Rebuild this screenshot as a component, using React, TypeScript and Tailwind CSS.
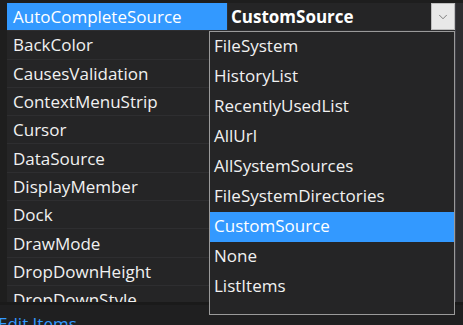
import { ChevronDown } from "lucide-react";

const PROPS = [
  "AutoCompleteSource",
  "BackColor",
  "CausesValidation",
  "ContextMenuStrip",
  "Cursor",
  "DataSource",
  "DisplayMember",
  "Dock",
  "DrawMode",
  "DropDownHeight",
  "DropDownStyle",
];

const OPTIONS = [
  "FileSystem",
  "HistoryList",
  "RecentlyUsedList",
  "AllUrl",
  "AllSystemSources",
  "FileSystemDirectories",
  "CustomSource",
  "None",
  "ListItems",
];

export default function App() {
  return (
    <div
      className="relative w-[463px] h-[325px] overflow-hidden bg-[#252526] text-[#f1f1f1] text-[17px] flex flex-col"
      style={{ fontFamily: '"Open Sans", "Noto Sans", sans-serif' }}
    >
      {/* property grid */}
      <div className="h-[302px] shrink-0 flex overflow-hidden pt-[3px] bg-[#1e1e1e]">
        <div className="w-[7px] shrink-0 bg-[#1e1e1e]" />
        <div className="flex-1 flex flex-col bg-[#252526]">
          {PROPS.map((p, i) => (
            <div key={p} className="flex h-[28.3px] shrink-0 border-b border-[#2e2e30]">
              <div
                className={
                  "w-[220px] shrink-0 flex items-center pl-[6px] leading-none " +
                  (i === 0 ? "bg-[#3399ff] text-white" : "")
                }
              >
                {p}
              </div>
              <div className="flex-1 flex items-center border-l border-[#2e2e30] pl-[3px]">
                {i === 0 && (
                  <>
                    <span className="flex-1 font-bold text-white leading-none">CustomSource</span>
                    <div className="w-[24px] h-[27px] bg-[#e8e8e8] border border-[#bdbdbd] flex items-center justify-center">
                      <ChevronDown size={14} strokeWidth={1.25} className="text-[#555555]" />
                    </div>
                  </>
                )}
              </div>
            </div>
          ))}
        </div>
        <div className="w-[8px] shrink-0 bg-[#2d2d30] border-l border-[#3f3f46]" />
      </div>

      {/* description panel */}
      <div className="flex-1 border-t-[3px] border-[#1a1a1a] bg-[#1f1f20] pt-[10px]">
        <div className="text-[#3399ff] ml-[-2px] leading-none">Edit Items</div>
      </div>

      {/* dropdown list */}
      <div className="absolute left-[209px] top-[31px] w-[246px] h-[284px] border border-[#9a9a9a] bg-[#252526]">
        {OPTIONS.map((o) => (
          <div
            key={o}
            className={
              "h-[30px] flex items-center pl-[4px] pb-[3px] leading-none " +
              (o === "CustomSource" ? "bg-[#3399ff] text-white" : "")
            }
          >
            {o}
          </div>
        ))}
      </div>
    </div>
  );
}
